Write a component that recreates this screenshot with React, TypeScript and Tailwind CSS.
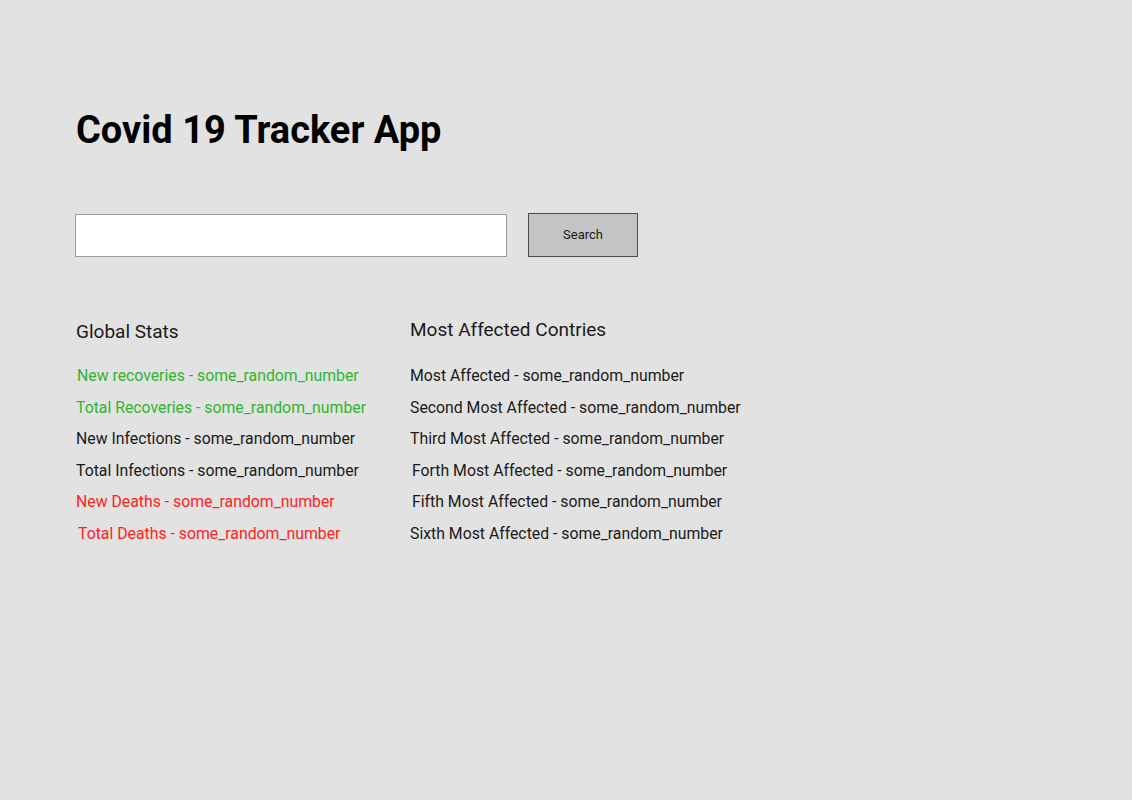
const globalStats = [
  { label: 'New recoveries', color: 'text-[#2fb52f]', shift: 'ml-[1px]' },
  { label: 'Total Recoveries', color: 'text-[#2fb52f]', shift: '' },
  { label: 'New Infections', color: 'text-[#1a1a1a]', shift: '' },
  { label: 'Total Infections', color: 'text-[#1a1a1a]', shift: '' },
  { label: 'New Deaths', color: 'text-[#ff1e1e]', shift: '' },
  { label: 'Total Deaths', color: 'text-[#ff1e1e]', shift: 'ml-[2px]' },
];

const affected = [
  { label: 'Most Affected', shift: '' },
  { label: 'Second Most Affected', shift: '' },
  { label: 'Third Most Affected', shift: '' },
  { label: 'Forth Most Affected', shift: 'ml-[2px]' },
  { label: 'Fifth Most Affected', shift: 'ml-[2px]' },
  { label: 'Sixth Most Affected', shift: '' },
];

export default function App() {
  return (
    <div className="min-h-[800px] bg-[#e2e2e2] px-[76px] pt-[108px] font-['Roboto',sans-serif]">
      <h1 className="text-[38px] font-bold leading-[44px] text-black">Covid 19 Tracker App</h1>

      <div className="mt-[61px] flex items-start">
        <input
          type="text"
          className="-ml-px mt-[1px] h-[43px] w-[432px] border border-[#9a9a9a] bg-white px-3 outline-none"
        />
        <button className="ml-[21px] h-[44px] w-[110px] border border-[#4a4a4a] bg-[#c4c4c4] text-[13px] text-[#1a1a1a]">
          Search
        </button>
      </div>

      <div className="mt-[62px] flex items-start">
        <div className="w-[334px]">
          <h2 className="mt-[2px] text-[19px] leading-[22px] text-[#1a1a1a]">Global Stats</h2>
          <ul className="mt-[17px]">
            {globalStats.map((s) => (
              <li key={s.label} className={`text-[15.8px] leading-[31.5px] ${s.color} ${s.shift}`}>
                {s.label} - some_random_number
              </li>
            ))}
          </ul>
        </div>
        <div>
          <h2 className="text-[19px] leading-[22px] text-[#1a1a1a]">Most Affected Contries</h2>
          <ul className="mt-[19px]">
            {affected.map((a) => (
              <li key={a.label} className={`text-[15.8px] leading-[31.5px] text-[#1a1a1a] ${a.shift}`}>
                {a.label} - some_random_number
              </li>
            ))}
          </ul>
        </div>
      </div>
    </div>
  );
}
